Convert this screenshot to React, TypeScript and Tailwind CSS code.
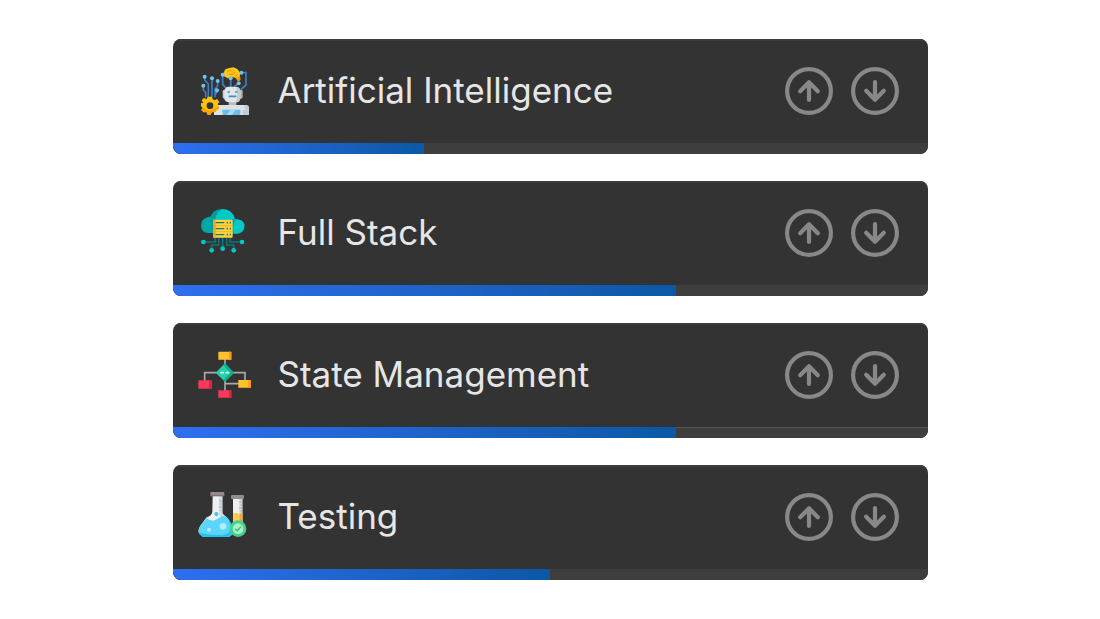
import type { ReactNode } from "react";

function IconFrame({ children }: { children: ReactNode }) {
  return (
    <svg viewBox="12 15 156 156" className="size-[52px] shrink-0 overflow-visible" aria-hidden="true">
      {children}
    </svg>
  );
}

const wireDots = [
  [32, 50], [54, 55], [28, 77], [71, 63], [69, 91], [86, 44], [142, 38], [110, 55], [134, 70],
];

function RobotIcon() {
  return (
    <IconFrame>
      <g fill="none" stroke="#3f7fc0" strokeWidth="5">
        <path d="M32 50V60L43 72V112M54 55V112M28 77V90L35 97V112M71 63V78L63 87V112M69 91V97L61 106" />
        <path d="M86 44V73L98 86M142 38H156V75L141 88M110 55V83M134 70L120 80" />
      </g>
      <path d="M88 40L94 28L106 24L119 22L131 28L139 40L137 50L139 60L132 64L124 53L112 51L101 55L90 49Z" fill="#ffc414" />
      <path d="M100 34L110 31L116 37M105 44L117 43L125 36M124 49L131 43" fill="none" stroke="#e99300" strokeWidth="3" />
      <path d="M124 52L139 50V58L134 64Z" fill="#ef9c13" />
      <path d="M110 55V80" stroke="#3f7fc0" strokeWidth="4" />
      {wireDots.map(([x, y]) => (
        <circle key={`${x}-${y}`} cx={x} cy={y} r="6" fill="#6fc4f1" />
      ))}
      <path d="M104 122H127V136H104Z" fill="#b4bcc2" />
      <rect x="86" y="89" width="12" height="27" rx="5" fill="#c5ccd1" />
      <rect x="134" y="89" width="12" height="27" rx="5" fill="#a9b2b9" />
      <rect x="91" y="80" width="48" height="47" rx="13" fill="#e3e6e9" />
      <path d="M127 80Q139 81 139 94V113Q139 127 125 127Q130 118 130 103Z" fill="#c2cad0" />
      <circle cx="104" cy="96" r="4" fill="#51a9dc" />
      <circle cx="127" cy="96" r="4" fill="#51a9dc" />
      <path d="M104 109H127" stroke="#3b8dcc" strokeWidth="5" />
      <path d="M60 165V142Q60 135 69 135H155Q165 135 165 145V165Z" fill="#dde2e5" />
      <path d="M150 135Q165 135 165 145V165H146V150H154Z" fill="#c5cdd2" />
      <path d="M84 149H139V165H87Z" fill="#68bdec" />
      <path d="M109 149H125L114 165H98Z" fill="#a2dcf8" />
      <path d="M41 110H54L56 118L62 121L69 117L76 126L71 132L74 139V147L68 149L65 156L53 157L50 164H41L37 156L29 157L22 150L26 143L21 139V130L28 128L23 121L30 114L38 118Z" fill="#ffc20c" />
      <path d="M22 139L28 141L38 151L49 151L61 145L74 139V147L68 149L65 156L53 157L50 164H41L37 156L29 157L22 150L26 143Z" fill="#f8a606" />
      <circle cx="48" cy="137" r="10" fill="#333" />
    </IconFrame>
  );
}

function CloudServerIcon() {
  return (
    <IconFrame>
      <path d="M58 93H42Q22 91 21 71Q21 49 45 44H57V93Z" fill="#00a8a4" />
      <path d="M49 53Q52 23 86 21Q116 22 123 51Q149 51 152 70Q151 92 132 95H58L50 75Z" fill="#00c9c8" />
      <path d="M49 44Q57 22 86 21Q65 32 63 53L58 92Q46 75 49 44ZM115 53L123 51L120 63Q115 79 119 94H115Z" fill="#009b9c" />
      <g fill="none" stroke="#08777b" strokeWidth="5">
        <path d="M64 108V120H31M74 108V129H53V143M86 106V137M98 108V129H119V143M108 108V120H142" />
      </g>
      <g fill="#00c9c8">
        <circle cx="28" cy="120" r="7" />
        <circle cx="53" cy="145" r="7" />
        <circle cx="86" cy="140" r="7" />
        <circle cx="119" cy="145" r="7" />
        <circle cx="144" cy="120" r="7" />
      </g>
      <rect x="57" y="53" width="59" height="54" rx="3" fill="#ffd33e" />
      <path d="M57 53H65V107H57Z" fill="#f4aa18" />
      {[62, 80, 98].map((y) => (
        <g key={y}>
          <path d={`M65 ${y}H91`} stroke="#1d747a" strokeWidth="4" />
          <path d={`M98 ${y}H102M107 ${y}H111`} stroke="#1d747a" strokeWidth="5" />
        </g>
      ))}
      <path d="M57 71H116M57 89H116" stroke="#eaa31c" strokeWidth="2" />
    </IconFrame>
  );
}

function FlowchartIcon() {
  return (
    <IconFrame>
      <path d="M93 44V140M32 111V86H153V111M93 119H135" fill="none" stroke="#a9a9a9" strokeWidth="5" />
      <path d="M73 23H112V47H73ZM133 108H171V131H133Z" fill="#ffc12c" />
      <path d="M105 23H112V47H105ZM163 108H171V131H163Z" fill="#ff9819" />
      <path d="M13 109H53V134H13ZM73 139H112V161H73Z" fill="#fa3958" />
      <path d="M45 109H53V134H45ZM105 139H112V161H105Z" fill="#da244d" />
      <path d="M93 58L120 86L93 113L65 86Z" fill="#24d1ad" />
      <path d="M93 58L120 86L93 113L88 108L108 86L88 63Z" fill="#0faf8c" />
      <path d="M81 86H88M97 86H104" stroke="#dcfff4" strokeWidth="5" strokeLinecap="round" />
    </IconFrame>
  );
}

function FlasksIcon() {
  return (
    <IconFrame>
      <path d="M56 29H85V82Q88 88 98 94L114 118Q124 136 112 148Q107 153 97 153H35Q20 153 14 139Q12 129 19 119L38 94Q53 90 55 78Z" fill="#edf0f2" />
      <path d="M75 31H85V82L96 94L87 99L75 87Z" fill="#d4dadd" />
      <path d="M38 97Q51 108 65 101L80 93Q91 86 102 97L114 118Q124 136 112 148Q107 153 97 153H35Q20 153 14 139Q12 129 19 119Z" fill="#5bd6fb" />
      <path d="M102 97L114 118Q124 136 112 148Q107 153 97 153H35Q20 153 14 139Q39 149 85 147Q109 145 110 124Z" fill="#20c2ef" />
      <rect x="49" y="18" width="42" height="13" rx="3" fill="#958a94" />
      <path d="M49 29H91" stroke="#7a6d78" strokeWidth="3" />
      <path d="M75 45H84M79 54H84M75 63H84M79 72H84" stroke="#9aa0a4" strokeWidth="2" />
      <circle cx="67" cy="84" r="6" fill="#35c8f0" />
      <circle cx="87" cy="121" r="10" fill="#b0ebff" />
      <circle cx="45" cy="131" r="6" fill="#b0ebff" />
      <path d="M117 39H145V120H117Z" fill="#f0f0ee" />
      <path d="M136 39H145V110H136Z" fill="#d3d6d7" />
      <path d="M117 82Q124 78 131 82Q138 86 145 82V120H117Z" fill="#ffcb55" />
      <path d="M137 84L145 82V120H137Z" fill="#eda83b" />
      <rect x="111" y="27" width="39" height="12" rx="3" fill="#958a94" />
      <path d="M135 48H145M139 57H145M135 66H145M139 75H145" stroke="#999" strokeWidth="2" />
      <circle cx="132" cy="128" r="25" fill="#45d18a" />
      <circle cx="132" cy="128" r="16" fill="#a7f3c7" />
      <path d="M124 128L130 134L141 122" fill="none" stroke="#36b978" strokeWidth="4" />
    </IconFrame>
  );
}

function ArrowButton({ direction, topic }: { direction: "up" | "down"; topic: string }) {
  return (
    <button type="button" aria-label={`Move ${topic} ${direction}`} className="size-12 cursor-pointer rounded-full text-[#888]">
      <svg viewBox="0 0 48 48" className="size-12" fill="none" stroke="currentColor" strokeWidth="4.2" strokeLinecap="round" strokeLinejoin="round" aria-hidden="true">
        <circle cx="24" cy="24" r="21.9" />
        {direction === "up" ? (
          <path d="M24 33V15.3M15.2 24.2L24 15.3L32.8 24.2" />
        ) : (
          <path d="M24 15V32.7M15.2 23.8L24 32.7L32.8 23.8" />
        )}
      </svg>
    </button>
  );
}

const topics = [
  { name: "Artificial Intelligence", progress: 33.3, icon: <RobotIcon /> },
  { name: "Full Stack", progress: 66.7, icon: <CloudServerIcon /> },
  { name: "State Management", progress: 66.7, icon: <FlowchartIcon />, divider: true },
  { name: "Testing", progress: 50, icon: <FlasksIcon /> },
];

export default function App() {
  return (
    <main className="min-h-screen bg-white px-6 py-[39px] font-['Inter',sans-serif]">
      <ul className="mx-auto flex w-full max-w-[755px] flex-col gap-[27px]">
        {topics.map((topic) => (
          <li key={topic.name} className="overflow-hidden rounded-lg bg-[#333]">
            <div className="flex items-center gap-7 border-t-2 border-[#3d3d3d] pt-6 pr-[29px] pb-[26px] pl-[25px]">
              {topic.icon}
              <h2 className="min-w-0 flex-1 pb-0.5 text-[35px] leading-[50px] text-[#e6e6e6]">{topic.name}</h2>
              <div className="flex gap-[18px]">
                <ArrowButton direction="up" topic={topic.name} />
                <ArrowButton direction="down" topic={topic.name} />
              </div>
            </div>
            <div
              role="progressbar"
              aria-label={`${topic.name} progress`}
              aria-valuenow={topic.progress}
              aria-valuemin={0}
              aria-valuemax={100}
              className={topic.divider ? "h-[11px] bg-[#3e3e3e] shadow-[inset_0_1px_#555]" : "h-[11px] bg-[#3e3e3e]"}
            >
              <div className="h-full rounded-bl-lg bg-linear-to-r from-[#2d6ff0] to-[#0a58a6]" style={{ width: `${topic.progress}%` }} />
            </div>
          </li>
        ))}
      </ul>
    </main>
  );
}
